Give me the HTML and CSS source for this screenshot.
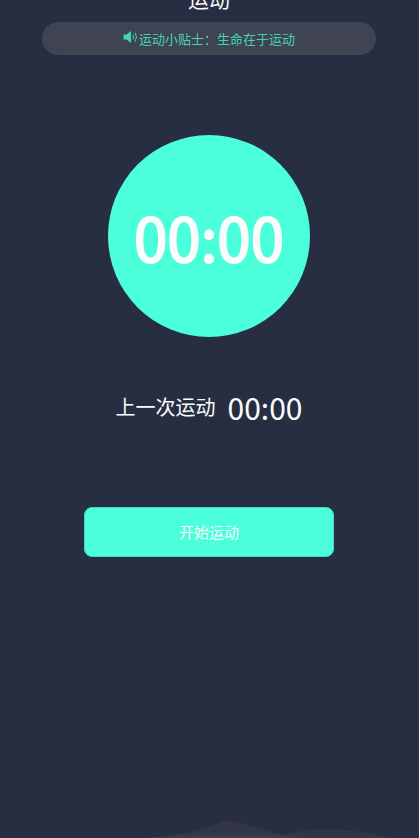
FILE: index.html
```
<!DOCTYPE html>
<html lang="zh-CN">
<head>
<meta charset="utf-8">
<meta name="viewport" content="width=device-width, initial-scale=1">
<title>运动</title>
<link rel="stylesheet" href="styles.css">
</head>
<body>
<main class="app">
  <h1 class="title">运动</h1>
  <p class="tip">
    <svg class="tip-icon" viewBox="0 0 15 14" aria-hidden="true">
      <path class="speaker" d="M0.500 4.500h3L8 1v12L3.500 9.500h-3z"/>
      <path class="wave" d="M9.800 4.500q1.600 2.500 0 5M12 2.500q3 4.500 0 9"/>
    </svg>
    <span>运动小贴士：生命在于运动</span>
  </p>
  <div class="timer">00:00</div>
  <div class="last">
    <span class="last-label">上一次运动</span>
    <span class="last-time">00:00</span>
  </div>
  <button class="start" type="button">开始运动</button>
  <svg class="hills" viewBox="0 0 419 18" preserveAspectRatio="none" aria-hidden="true">
    <path class="hill" d="M150 18C180 14 199 12 224 1Q229 0 237 2C265 9 280 15 302 18z"/>
    <path class="hill" d="M272 18Q290 12 310 10Q350 7 392 18z"/>
    <path class="ridge" d="M145 18L182 15H282L302 18z"/>
  </svg>
</main>
</body>
</html>
```
FILE: styles.css
```
* { box-sizing: border-box; }

body {
  margin: 0;
  background: #fff;
  font-family: "Noto Sans CJK SC", sans-serif;
}

.app {
  display: flex;
  flex-direction: column;
  align-items: center;
  min-height: 100vh;
  margin-right: 1px;
  padding-right: 1px;
  overflow: hidden;
  background: #282e41;
  color: #fafcfc;
}

.title {
  margin: -18px 0 0;
  font-size: 21px;
  line-height: 32px;
  font-weight: 400;
}

.tip {
  display: flex;
  justify-content: center;
  align-items: center;
  gap: 1px;
  width: 80%;
  height: 33px;
  margin: 8px 0 0;
  border-radius: 17px;
  background: #3f4352;
  color: #43d4b5;
  font-size: 13px;
  line-height: 20px;
}

.tip-icon {
  width: 15px;
  height: 14px;
  margin-bottom: 4px;
}

.speaker { fill: #43d4b5; }
.wave { fill: none; stroke: #43d4b5; }

.timer {
  display: flex;
  justify-content: center;
  align-items: center;
  width: 202px;
  height: 202px;
  margin-top: 80px;
  border-radius: 50%;
  background: #4cffdb;
  font-size: 60px;
  line-height: 88px;
  font-weight: 400;
  -webkit-text-stroke: 2px #fafcfc;
}

.last {
  display: flex;
  align-items: center;
  gap: 12px;
  margin-top: 48px;
}

.last-label {
  font-size: 20px;
  line-height: 44px;
}

.last-time {
  font-size: 30px;
  line-height: 44px;
}

.start {
  width: 60%;
  height: 50px;
  margin-top: 78px;
  border: 1px solid #44d8be;
  border-radius: 8px;
  background: #4cffdb;
  color: #fafcfc;
  font-family: inherit;
  font-size: 15px;
  line-height: 22px;
}

.hills {
  display: block;
  width: 100%;
  height: 18px;
  margin-top: auto;
}

.hill { fill: #313547; }
.ridge { fill: #3a3c4d; }
```
